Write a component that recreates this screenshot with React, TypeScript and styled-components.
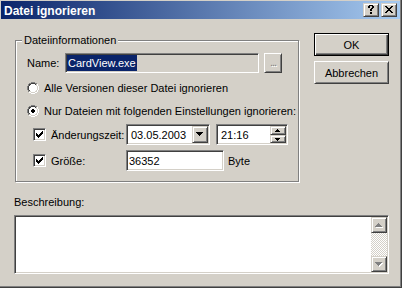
import React from 'react';
import styled, { createGlobalStyle, css } from 'styled-components';

const face = '#d4d0c8';
const shadow = '#808080';
const darkShadow = '#404040';
const white = '#ffffff';
const highlight = '#0a246a';

const GlobalStyle = createGlobalStyle`
  html, body {
    margin: 0;
    padding: 0;
    background: ${face};
  }
  body {
    font-family: "Liberation Sans", Arial, sans-serif;
    font-size: 11px;
    color: #000;
  }
`;

// pixel glyphs, one char per pixel
const palette: Record<string, string> = {
  k: '#000000',
  g: shadow,
  d: darkShadow,
  l: face,
  w: white,
  f: white,
};

const closeGlyph = [
  'kk....kk',
  '.kk..kk.',
  '..kkkk..',
  '...kk...',
  '..kkkk..',
  '.kk..kk.',
  'kk....kk',
  '........',
];

const helpGlyph = [
  '..kkkk..',
  '.kk..kk.',
  '.kk..kk.',
  '....kk..',
  '...kk...',
  '...kk...',
  '........',
  '...kk...',
  '...kk...',
  '........',
];

const checkGlyph = [
  '......k',
  '.....kk',
  'k...kkk',
  'kk.kkk.',
  'kkkkk..',
  '.kkk...',
  '..k....',
];

const radioGlyph = [
  '....gggg....',
  '..ggddddgg..',
  '.gddffffdlw.',
  '.gdfffffflw.',
  'gdfffffffflw',
  'gdfffffffflw',
  'gdfffffffflw',
  'gdfffffffflw',
  '.gdfffffflw.',
  '.gllffffllw.',
  '..wwllllww..',
  '....wwww....',
];

const radioDot: [number, number, number][] = [
  [4, 5, 6],
  [5, 4, 7],
  [6, 4, 7],
  [7, 5, 6],
];

const checkedRadioGlyph = radioGlyph.map((row, y) => {
  const dot = radioDot.find(d => d[0] === y);
  if (!dot) return row;
  return row
    .split('')
    .map((c, x) => (x >= dot[1] && x <= dot[2] ? 'k' : c))
    .join('');
});

const comboArrow = [
  'kkkkkkk.',
  '.kkkkk..',
  '..kkk...',
  '...k....',
  '........',
];

const spinUp = ['..k...', '.kkk..', 'kkkkk.'];
const spinDown = ['......', 'kkkkk.', '.kkk..', '..k...'];

const arrowUp = ['...k...', '..kkk..', '.kkkkk.', 'kkkkkkk'];
const arrowDown = ['kkkkkkk', '.kkkkk.', '..kkk..', '...k...'];

// grey glyph with a white shadow one pixel down and right, as drawn for disabled controls
const disabled = (rows: string[]) => {
  const h = rows.length + 1;
  const w = rows[0].length + 1;
  const grid = Array.from({ length: h }, () => Array(w).fill('.'));
  rows.forEach((row, y) =>
    row.split('').forEach((c, x) => {
      if (c === 'k') grid[y + 1][x + 1] = 'w';
    })
  );
  rows.forEach((row, y) =>
    row.split('').forEach((c, x) => {
      if (c === 'k') grid[y][x] = 'g';
    })
  );
  return grid.map(r => r.join(''));
};

const Glyph = styled.svg`
  display: block;
  flex-shrink: 0;
`;

const PixelIcon = ({ rows }: { rows: string[] }) => {
  const width = rows[0].length;
  const height = rows.length;
  return (
    <Glyph width={width} height={height} viewBox={`0 0 ${width} ${height}`} shapeRendering="crispEdges">
      {rows.flatMap((row, y) =>
        row.split('').map((c, x) =>
          palette[c] ? <rect key={`${x}-${y}`} x={x} y={y} width={1} height={1} fill={palette[c]} /> : null
        )
      )}
    </Glyph>
  );
};

const raised = css`
  border: 1px solid;
  border-color: ${white} ${darkShadow} ${darkShadow} ${white};
  box-shadow: inset 1px 1px 0 ${face}, inset -1px -1px 0 ${shadow};
`;

const raisedFrame = css`
  border: 1px solid;
  border-color: ${face} ${darkShadow} ${darkShadow} ${face};
  box-shadow: inset 1px 1px 0 ${white}, inset -1px -1px 0 ${shadow};
`;

const sunken = css`
  border: 1px solid;
  border-color: ${shadow} ${white} ${white} ${shadow};
  box-shadow: inset 1px 1px 0 ${darkShadow}, inset -1px -1px 0 ${face};
`;

const Window = styled.div`
  width: 402px;
  height: 288px;
  box-sizing: border-box;
  background: ${face};
  border-right: 1px solid ${darkShadow};
  border-bottom: 1px solid ${darkShadow};
  box-shadow: inset -1px -1px 0 ${shadow};
  overflow: hidden;
`;

const TitleBar = styled.div`
  display: flex;
  align-items: center;
  height: 18px;
  margin: 1px 1px 0 1px;
  padding: 0 3px;
  background: linear-gradient(to right, #0a246a, #a6caf0);
`;

const TitleText = styled.div`
  flex: 1;
  padding-top: 2px;
  color: ${white};
  font-weight: bold;
  font-size: 12px;
  line-height: 16px;
`;

const CaptionButtons = styled.div`
  display: flex;
  gap: 2px;
`;

const CaptionButton = styled.div`
  width: 16px;
  height: 14px;
  box-sizing: border-box;
  display: flex;
  align-items: center;
  justify-content: center;
  background: ${face};
  ${raisedFrame};
`;

const Body = styled.div`
  display: flex;
  flex-direction: column;
  padding: 14px 0 0 14px;
`;

const TopRow = styled.div`
  display: flex;
  align-items: flex-start;
`;

const GroupBox = styled.fieldset`
  width: 284px;
  box-sizing: border-box;
  margin: 0 0 0 1px;
  padding: 0;
  min-inline-size: auto;
  border: 1px solid ${shadow};
  box-shadow: 1px 1px 0 ${white}, inset 1px 1px 0 ${white};
`;

const GroupLegend = styled.legend`
  margin-left: 6px;
  padding: 0 2px;
  line-height: 14px;
  background: ${face};
`;

const GroupContent = styled.div`
  display: flex;
  flex-direction: column;
  padding: 6px 0 10px 11px;
`;

const NameRow = styled.div`
  display: flex;
  align-items: center;
  height: 20px;
`;

const NameLabel = styled.span`
  width: 38px;
`;

const ReadOnlyField = styled.div`
  width: 194px;
  height: 20px;
  box-sizing: border-box;
  padding: 1px;
  display: flex;
  background: ${face};
  ${sunken};
`;

const Selection = styled.span`
  padding: 0 1px;
  line-height: 16px;
  color: ${white};
  background: ${highlight};
`;

const BrowseButton = styled.div`
  width: 18px;
  height: 20px;
  box-sizing: border-box;
  margin-left: 5px;
  display: flex;
  align-items: center;
  justify-content: center;
  padding-bottom: 2px;
  color: ${shadow};
  text-shadow: 1px 1px 0 ${white};
  letter-spacing: -1px;
  background: ${face};
  ${raised};
`;

const OptionRow = styled.div<{ $top: number; $height: number }>`
  display: flex;
  align-items: center;
  height: ${p => p.$height}px;
  margin-top: ${p => p.$top}px;
`;

const OptionLabel = styled.span`
  margin-left: 5px;
  white-space: nowrap;
`;

const CheckOption = styled.div`
  width: 99px;
  box-sizing: border-box;
  padding-left: 6px;
  display: flex;
  align-items: center;
`;

const CheckBox = styled.div`
  width: 13px;
  height: 13px;
  box-sizing: border-box;
  display: flex;
  align-items: center;
  justify-content: center;
  background: ${white};
  ${sunken};
`;

const Field = styled.div<{ $width: number; $offset?: number }>`
  width: ${p => p.$width}px;
  height: 21px;
  box-sizing: border-box;
  margin-left: ${p => p.$offset ?? 0}px;
  padding: 1px;
  display: flex;
  background: ${white};
  ${sunken};
`;

const FieldText = styled.span<{ $indent: number }>`
  flex: 1;
  align-self: center;
  padding-left: ${p => p.$indent}px;
`;

const DropButton = styled.div`
  width: 16px;
  box-sizing: border-box;
  display: flex;
  align-items: center;
  justify-content: center;
  background: ${face};
  ${raisedFrame};
`;

const SpinBox = styled.div`
  width: 16px;
  display: flex;
  flex-direction: column;
`;

const SpinButton = styled.div<{ $height: number }>`
  height: ${p => p.$height}px;
  box-sizing: border-box;
  display: flex;
  align-items: center;
  justify-content: center;
  background: ${face};
  ${raisedFrame};
`;

const UnitLabel = styled.span`
  margin-left: 4px;
`;

const ButtonColumn = styled.div`
  display: flex;
  flex-direction: column;
  gap: 5px;
  margin-left: 15px;
`;

const PushButton = styled.button<{ $default?: boolean }>`
  width: 75px;
  height: 23px;
  box-sizing: border-box;
  margin: 0;
  padding: 0;
  font: inherit;
  color: #000;
  background: ${face};
  ${p =>
    p.$default
      ? css`
          border: 1px solid #000;
          box-shadow: inset 1px 1px 0 ${white}, inset -1px -1px 0 ${darkShadow}, inset -2px -2px 0 ${shadow};
        `
      : raised};
`;

const FieldCaption = styled.div`
  margin-top: 14px;
  line-height: 13px;
`;

const TextArea = styled.div`
  width: 375px;
  height: 59px;
  box-sizing: border-box;
  margin-top: 6px;
  padding: 1px;
  display: flex;
  background: ${white};
  ${sunken};
`;

const TextBody = styled.div`
  flex: 1;
`;

const ScrollBar = styled.div`
  width: 16px;
  display: flex;
  flex-direction: column;
`;

const ScrollButton = styled.div`
  height: 16px;
  box-sizing: border-box;
  display: flex;
  align-items: center;
  justify-content: center;
  background: ${face};
  ${raisedFrame};
`;

const ScrollTrack = styled.div`
  flex: 1;
  background: repeating-conic-gradient(${white} 0 25%, ${face} 0 50%) 0 0 / 2px 2px;
`;

export default function App() {
  return (
    <>
      <GlobalStyle />
      <Window>
        <TitleBar>
          <TitleText>Datei ignorieren</TitleText>
          <CaptionButtons>
            <CaptionButton title="Hilfe">
              <PixelIcon rows={helpGlyph} />
            </CaptionButton>
            <CaptionButton title="Schließen">
              <PixelIcon rows={closeGlyph} />
            </CaptionButton>
          </CaptionButtons>
        </TitleBar>
        <Body>
          <TopRow>
            <GroupBox>
              <GroupLegend>Dateiinformationen</GroupLegend>
              <GroupContent>
                <NameRow>
                  <NameLabel>Name:</NameLabel>
                  <ReadOnlyField>
                    <Selection>CardView.exe</Selection>
                  </ReadOnlyField>
                  <BrowseButton>...</BrowseButton>
                </NameRow>
                <OptionRow $top={7} $height={15}>
                  <PixelIcon rows={radioGlyph} />
                  <OptionLabel>Alle Versionen dieser Datei ignorieren</OptionLabel>
                </OptionRow>
                <OptionRow $top={8} $height={15}>
                  <PixelIcon rows={checkedRadioGlyph} />
                  <OptionLabel>Nur Dateien mit folgenden Einstellungen ignorieren:</OptionLabel>
                </OptionRow>
                <OptionRow $top={6} $height={21}>
                  <CheckOption>
                    <CheckBox>
                      <PixelIcon rows={checkGlyph} />
                    </CheckBox>
                    <OptionLabel>Änderungszeit:</OptionLabel>
                  </CheckOption>
                  <Field $width={84}>
                    <FieldText $indent={3}>03.05.2003</FieldText>
                    <DropButton>
                      <PixelIcon rows={comboArrow} />
                    </DropButton>
                  </Field>
                  <Field $width={72} $offset={6}>
                    <FieldText $indent={3}>21:16</FieldText>
                    <SpinBox>
                      <SpinButton $height={9}>
                        <PixelIcon rows={spinUp} />
                      </SpinButton>
                      <SpinButton $height={8}>
                        <PixelIcon rows={spinDown} />
                      </SpinButton>
                    </SpinBox>
                  </Field>
                </OptionRow>
                <OptionRow $top={5} $height={21}>
                  <CheckOption>
                    <CheckBox>
                      <PixelIcon rows={checkGlyph} />
                    </CheckBox>
                    <OptionLabel>Größe:</OptionLabel>
                  </CheckOption>
                  <Field $width={98}>
                    <FieldText $indent={1}>36352</FieldText>
                  </Field>
                  <UnitLabel>Byte</UnitLabel>
                </OptionRow>
              </GroupContent>
            </GroupBox>
            <ButtonColumn>
              <PushButton $default>OK</PushButton>
              <PushButton>Abbrechen</PushButton>
            </ButtonColumn>
          </TopRow>
          <FieldCaption>Beschreibung:</FieldCaption>
          <TextArea>
            <TextBody />
            <ScrollBar>
              <ScrollButton>
                <PixelIcon rows={disabled(arrowUp)} />
              </ScrollButton>
              <ScrollTrack />
              <ScrollButton>
                <PixelIcon rows={disabled(arrowDown)} />
              </ScrollButton>
            </ScrollBar>
          </TextArea>
        </Body>
      </Window>
    </>
  );
}
